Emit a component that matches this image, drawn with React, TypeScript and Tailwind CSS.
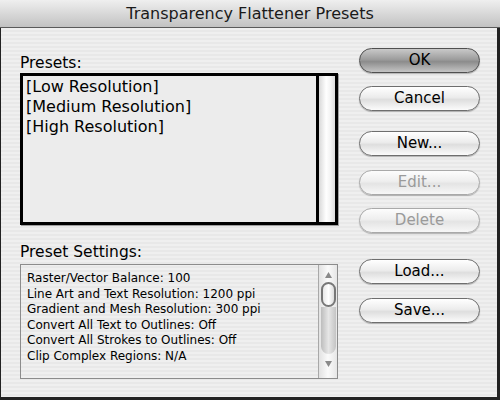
import React from 'react';

const font = { fontFamily: '"DejaVu Sans", "Noto Sans", sans-serif' };

type BtnProps = { label: string; kind?: 'default' | 'normal' | 'disabled'; className?: string };

function AquaButton({ label, kind = 'normal', className = '' }: BtnProps) {
  const tone =
    kind === 'default'
      ? 'border-[#4f4f4f] bg-[linear-gradient(to_bottom,#c9c9c9_0%,#9d9d9d_45%,#8c8c8c_55%,#c4c4c4_100%)] text-black'
      : kind === 'disabled'
      ? 'border-[#a9a9a9] bg-[linear-gradient(to_bottom,#fdfdfd_0%,#eeeeee_45%,#e4e4e4_55%,#f7f7f7_100%)] text-[#9a9a9a]'
      : 'border-[#6e6e6e] bg-[linear-gradient(to_bottom,#ffffff_0%,#ececec_45%,#dedede_55%,#fbfbfb_100%)] text-black';
  return (
    <div
      className={`w-[121px] h-[25px] rounded-full border flex items-center justify-center text-[15px] leading-none shadow-[0_1px_1px_rgba(0,0,0,0.25)] ${tone} ${className}`}
    >
      {label}
    </div>
  );
}

const settings = [
  'Raster/Vector Balance: 100',
  'Line Art and Text Resolution: 1200 ppi',
  'Gradient and Mesh Resolution: 300 ppi',
  'Convert All Text to Outlines: Off',
  'Convert All Strokes to Outlines: Off',
  'Clip Complex Regions: N/A',
];

export default function App() {
  return (
    <div
      style={font}
      className="w-[500px] h-[400px] flex flex-col bg-[#ededed] text-black overflow-hidden"
    >
      {/* title bar */}
      <div className="h-[28px] shrink-0 border-b border-[#5a5a5a] bg-[linear-gradient(to_bottom,#efefef,#c2c2c2)] flex items-center justify-center text-[16px] text-[#1a1a1a]">
        Transparency Flattener Presets
      </div>

      {/* body */}
      <div className="flex-1 flex border-l border-r-[3px] border-b-[3px] border-[#222] bg-[repeating-linear-gradient(to_bottom,#efefef_0px,#efefef_2px,#e8e8e8_2px,#e8e8e8_4px)]">
        {/* left column */}
        <div className="w-[318px] ml-[19px] flex flex-col">
          <div className="mt-[26px] h-[18px] text-[15.5px] leading-[18px]">Presets:</div>
          <div className="mt-[1px] h-[152px] border-[3px] border-black flex shadow-[1px_1px_0_#a0a0a0]">
            <div className="flex-1 border-r-[3px] border-black bg-[#ececec] pl-[3px] pt-[1px] text-[16px] leading-[20px]">
              <div>[Low Resolution]</div>
              <div>[Medium Resolution]</div>
              <div>[High Resolution]</div>
            </div>
            <div className="w-[16px] bg-[linear-gradient(to_right,#d9d9d9,#ffffff_45%,#f4f4f4_70%,#dcdcdc)]" />
          </div>

          <div className="mt-[18px] h-[18px] text-[15.5px] leading-[18px]">Preset Settings:</div>
          <div className="mt-[3px] h-[115px] border border-[#8c8c8c] flex">
            <div className="flex-1 pl-[6px] pt-[6px] text-[12px] leading-[15.5px] text-black">
              {settings.map(s => (
                <div key={s}>{s}</div>
              ))}
            </div>
            <div className="w-[19px] border-l border-[#a8a8a8] bg-[linear-gradient(to_right,#e2e2e2,#fafafa_50%,#e6e6e6)] flex flex-col items-center">
              <svg width="9" height="8" viewBox="0 0 9 8" className="mt-[6px]">
                <path d="M4.5 1 L8 7 L1 7 Z" fill="#8a8a8a" />
              </svg>
              <div className="mt-[3px] w-[15px] h-[25px] rounded-full border-2 border-[#777] bg-[linear-gradient(to_right,#e8e8e8,#ffffff_50%,#dcdcdc)]" />
              <div className="w-[15px] h-[47px] rounded-b-full bg-[linear-gradient(to_right,#bdbdbd,#e6e6e6_50%,#c4c4c4)]" />
              <svg width="9" height="8" viewBox="0 0 9 8" className="mt-[6px]">
                <path d="M1 1 L8 1 L4.5 7 Z" fill="#8a8a8a" />
              </svg>
            </div>
          </div>
        </div>

        {/* right column */}
        <div className="ml-[21px] flex flex-col">
          <AquaButton label="OK" kind="default" className="mt-[20px]" />
          <AquaButton label="Cancel" className="mt-[13px]" />
          <AquaButton label="New..." className="mt-[20px]" />
          <AquaButton label="Edit..." kind="disabled" className="mt-[14px]" />
          <AquaButton label="Delete" kind="disabled" className="mt-[13px]" />
          <AquaButton label="Load..." className="mt-[26px]" />
          <AquaButton label="Save..." className="mt-[14px]" />
        </div>
      </div>
    </div>
  );
}
